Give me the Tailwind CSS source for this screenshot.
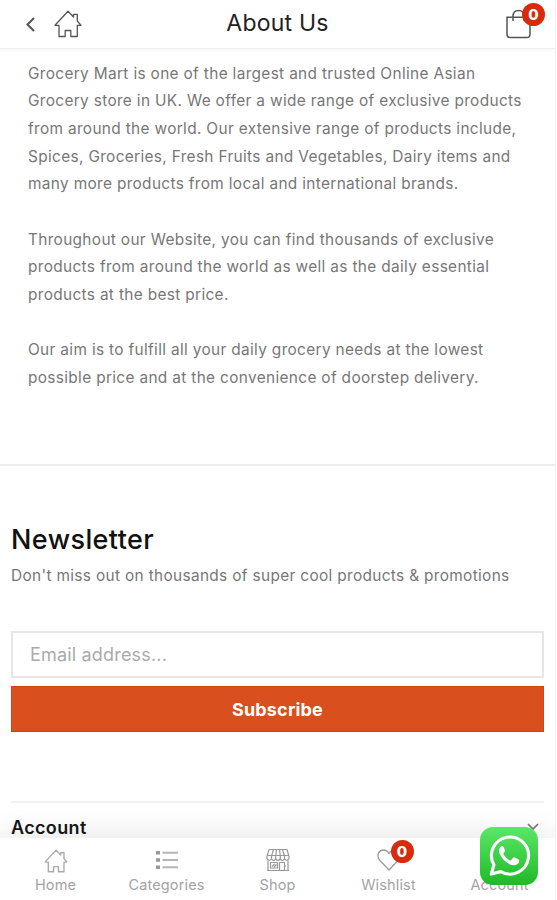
<!DOCTYPE html>
<html lang="en">
<head>
    <meta charset="UTF-8">
    <meta name="viewport" content="width=device-width, initial-scale=1.0">
    <title>About Us - Grocery Mart</title>
    <script src="https://cdn.jsdelivr.net/npm/@tailwindcss/browser@4"></script>
</head>
<body class="bg-white font-['Inter','Liberation_Sans',sans-serif] overflow-hidden">
    <div class="relative flex flex-col w-[556px] h-[900px] border-r border-[#f3f3f3] overflow-hidden">

        <!-- Header -->
        <header class="grid grid-cols-3 items-center h-[49px] shrink-0 border-b border-[#efefef] shadow-[0_1px_4px_rgba(0,0,0,0.04)]">
            <div class="flex items-center pl-[26px] gap-[19px]">
                <svg class="w-[9px] h-[15px]" viewBox="0 0 9 15" fill="none" stroke="#555" stroke-width="2"><path d="M8 1L1.5 7.5L8 14"/></svg>
                <svg class="w-7 h-7" viewBox="0 0 28 28" fill="none" stroke="#555" stroke-width="1.3" stroke-linejoin="round" stroke-linecap="round">
                    <path d="M1 15.3L14 1.3L19.5 7V4.3H23.3V11L27 15.3M1 15.3H5V26.5H11.2V20.5H16.8V26.5H23.3V15.3H27"/>
                </svg>
            </div>
            <h1 class="text-center text-[23px] leading-7 text-[#222] whitespace-nowrap tracking-[0.01em] -mt-[3px]">About Us</h1>
            <div class="flex justify-end pr-[23px]">
                <div class="relative">
                    <svg class="w-[27px] h-[30px] block" viewBox="0 0 27 30" fill="none" stroke="#555" stroke-width="1.5">
                        <path d="M2 8.3H25V25.2Q25 28.5 21.7 28.5H5.3Q2 28.5 2 25.2Z"/>
                        <path d="M8 12V7.5Q8 1.5 13.5 1.5T19 7.5V12"/>
                    </svg>
                    <span class="absolute left-[17px] -top-[6px] w-[23px] h-[23px] rounded-full bg-[#d62b0c] text-white text-[15px] font-extrabold leading-[23px] text-center">0</span>
                </div>
            </div>
        </header>

        <main class="flex-1 min-h-0 overflow-hidden">
            <section class="h-[417px] border-b-2 border-[#eeeeee] pl-7 pt-[10.5px] text-[15.4px] leading-[27.68px] text-[#777] tracking-[0.022em] whitespace-nowrap">
                <p class="mb-[27.68px]">
                    Grocery Mart is one of the largest and trusted Online Asian<br>
                    Grocery store in UK. We offer a wide range of exclusive products<br>
                    from around the world. Our extensive range of products include,<br>
                    Spices, Groceries, Fresh Fruits and Vegetables, Dairy items and<br>
                    many more products from local and international brands.
                </p>
                <p class="mb-[27.68px]">
                    Throughout our Website, you can find thousands of exclusive<br>
                    products from around the world as well as the daily essential<br>
                    products at the best price.
                </p>
                <p>
                    Our aim is to fulfill all your daily grocery needs at the lowest<br>
                    possible price and at the convenience of doorstep delivery.
                </p>
            </section>

            <!-- Newsletter -->
            <section class="px-[11px] pt-[56px]">
                <h2 class="text-[27px] leading-9 font-medium text-[#111] tracking-[0.015em]">Newsletter</h2>
                <p class="text-[15.4px] leading-[27px] mt-[4px] text-[#777] whitespace-nowrap tracking-[0.022em]">Don't miss out on thousands of super cool products &amp; promotions</p>
                <form class="mt-[42px]">
                    <input type="email" placeholder="Email address..." class="block w-full h-[47px] border-2 border-[#e6e6e6] px-[17px] text-[18px] text-[#777] placeholder-[#aaa] tracking-[0.01em] outline-none">
                    <button type="button" class="block w-full h-[46px] mt-[8px] bg-[#d9501e] border border-[#d6430f] text-white text-[18px] font-bold tracking-[0.01em]">Subscribe</button>
                </form>
            </section>

            <!-- Footer menu -->
            <section class="mx-[11px] mt-[69px] border-t-2 border-[#f0f2f2]">
                <div class="flex items-center justify-between h-[48px] pr-[5px]">
                    <span class="text-[18px] font-semibold text-[#161616] tracking-[0.02em]">Account</span>
                    <svg class="w-3 h-2" viewBox="0 0 12 8" fill="none" stroke="#777" stroke-width="1.7"><path d="M1 1L6 6L11 1"/></svg>
                </div>
            </section>
        </main>

        <!-- Bottom navigation -->
        <nav class="relative grid grid-cols-5 h-[62px] shrink-0 bg-white shadow-[0_0_32px_rgba(0,0,0,0.12)] text-[14.5px] leading-5 text-[#a3a3a3] tracking-[0.01em]">
            <a href="#" class="flex flex-col items-center pt-[11px] gap-[2px]">
                <svg class="w-6 h-6" viewBox="0 0 28 28" fill="none" stroke="#aaa" stroke-width="1.6" stroke-linejoin="round">
                    <path d="M1 15.3L14 1.3L19.5 7V4.3H23.3V11L27 15.3M1 15.3H5V26.5H11.2V20.5H16.8V26.5H23.3V15.3H27"/>
                </svg>
                <span>Home</span>
            </a>
            <a href="#" class="flex flex-col items-center pt-[10px] gap-[3px]">
                <svg class="w-6 h-6" viewBox="0 0 24 24">
                    <path d="M1 3h4v3.5H1zM1 10.3h4v3.5H1zM1 17.6h4v3.5H1z" fill="#999"/>
                    <path d="M7.5 4.8H23M7.5 12H23M7.5 19.3H23" stroke="#b5b5b5" stroke-width="2"/>
                </svg>
                <span>Categories</span>
            </a>
            <a href="#" class="flex flex-col items-center pt-[10px] gap-[3px]">
                <svg class="w-6 h-6" viewBox="0 0 24 24" fill="none" stroke="#999" stroke-width="1.2" stroke-linejoin="round">
                    <path d="M3 1.5H21L23 8.5V10.5Q21 14 18.5 10.8Q16.5 14 14.3 10.8Q12 14 9.7 10.8Q7.5 14 5.5 10.8Q3 14 1 10.5V8.5Z"/>
                    <path d="M1 7.5H23M7.5 1.5L5.5 8V11M10.5 1.5L9.7 8V11M13.5 1.5L14.3 8V11M16.5 1.5L18.5 8V11M2 12.5V22.5M22 12.5V22.5M1 22.5H23M13.5 22V14.5H18.5V22M4.5 14.5H11.5V20H4.5ZM6 18.5L8.5 16M8 19L10.5 16.5M19 18H20"/>
                </svg>
                <span>Shop</span>
            </a>
            <a href="#" class="flex flex-col items-center pt-[10px] gap-[3px]">
                <span class="relative">
                    <svg class="w-6 h-6 block" viewBox="0 0 24 24" fill="none" stroke="#999" stroke-width="1.3" stroke-linejoin="round">
                        <path d="M12 22L2.5 12C-1 7 2 2 6.5 2Q10 2 12 5.5Q14 2 17.5 2C22 2 25 7 21.5 12Z"/>
                    </svg>
                    <span class="absolute left-[14px] -top-[8px] w-[23px] h-[23px] rounded-full bg-[#d62b0c] text-white text-[15px] font-extrabold leading-[23px] text-center">0</span>
                </span>
                <span>Wishlist</span>
            </a>
            <a href="#" class="flex flex-col items-center justify-end pb-[5px]">
                <span>Account</span>
            </a>
        </nav>

        <!-- WhatsApp button -->
        <a href="#" aria-label="WhatsApp" class="absolute left-[480px] top-[826.5px]">
            <svg class="w-[58px] h-[58px] block" viewBox="0 0 58 58">
                <defs>
                    <linearGradient id="wa" x1="0" y1="0" x2="0" y2="1">
                        <stop offset="0" stop-color="#5ae768"/>
                        <stop offset="1" stop-color="#20b928"/>
                    </linearGradient>
                </defs>
                <rect width="58" height="58" rx="13" fill="url(#wa)"/>
                <g transform="translate(1 1.5) scale(0.95)">
                    <path d="M10.8 48L13.6 38.2A19.5 19.5 0 1 1 20.8 45.4Z" fill="none" stroke="#fff" stroke-width="3.3" stroke-linejoin="round"/>
                    <path d="M23 18.5Q22 18 20.8 19.2Q18 22 19.5 26Q22.5 33.5 30 37.5Q36 40.3 39.3 36.5Q40.8 34 40 33Q38 31.5 35.5 30.5Q34.3 30 33.5 31.2L32 33Q31 34 29.5 33.2Q25.5 31 23.6 27.2Q23.2 26.3 24.2 25.3Q25.6 23.8 25.2 23Q24.2 20 23 18.5Z" fill="#fff"/>
                </g>
            </svg>
        </a>
    </div>
</body>
</html>
